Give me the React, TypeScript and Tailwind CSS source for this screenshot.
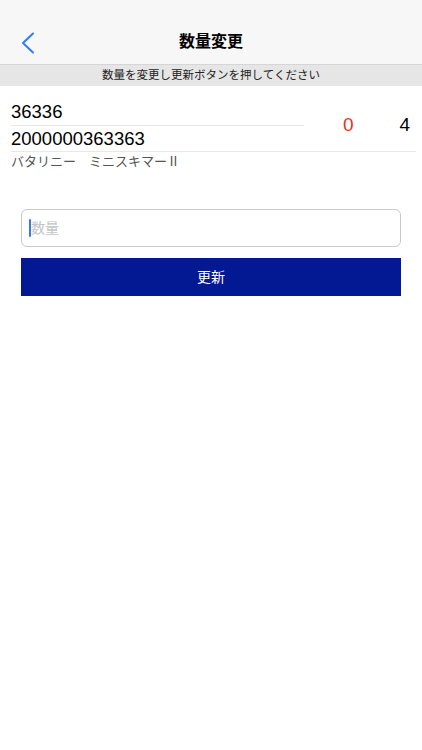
const font = { fontFamily: '"Liberation Sans", "Noto Sans CJK JP", sans-serif' };

function BackChevron() {
  return (
    <svg width="14" height="22" viewBox="0 0 14 22" fill="none" className="absolute left-[21px] top-[12px]">
      <polyline points="12,1.5 2,11 12,20.5" stroke="#2f7cf6" strokeWidth="2" strokeLinecap="round" strokeLinejoin="round" />
    </svg>
  );
}

export default function App() {
  return (
    <div className="w-[422px] h-[750px] bg-white text-black" style={font}>
      {/* ナビゲーション */}
      <div className="bg-[#f7f7f7] border-b border-[#d6d6d6]">
        <div className="h-[20px]" />
        <div className="relative h-[44px] flex items-center justify-center">
          <BackChevron />
          <h1 className="text-[16px] font-bold">数量変更</h1>
        </div>
      </div>
      <div className="h-[21px] bg-[#e6e6e6] flex items-center justify-center text-[11.5px] text-[#222]">
        数量を変更し更新ボタンを押してください
      </div>

      {/* 商品 */}
      <div className="pl-[11px] pr-[6px] pt-[13px]">
        <div className="flex border-b border-[#e8e8e8]">
          <div className="w-[293px]">
            <div className="h-[27px] flex items-center text-[18.5px] border-b border-[#e8e8e8]">36336</div>
            <div className="h-[25px] flex items-center text-[18.5px]">2000000363363</div>
          </div>
          <div className="flex-1 flex items-center">
            <span className="ml-[39px] text-[19px] text-[#e8321c]">0</span>
            <span className="ml-[46px] text-[19px]">4</span>
          </div>
        </div>
        <p className="mt-[1px] text-[13px] text-[#555] leading-[18px]">バタリニー　ミニスキマーⅡ</p>
      </div>

      <div className="px-[21px] mt-[38px]">
        <div className="h-[38px] rounded-[6px] border border-[#c8c8c8] flex items-center pl-[7px]">
          <span className="w-[2px] h-[18px] bg-[#3478f6] rounded-full" />
          <span className="text-[14px] text-[#c4c4c4]">数量</span>
        </div>
        <button className="mt-[11px] w-full h-[38px] bg-[#021993] text-white text-[14px] flex items-center justify-center">
          更新
        </button>
      </div>
    </div>
  );
}
